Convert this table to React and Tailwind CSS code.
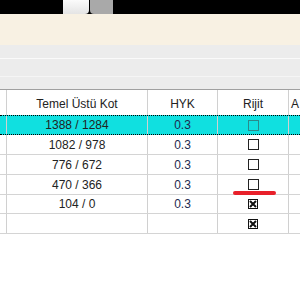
import React from 'react';

const rows = [
  { kot: '1388 / 1284', hyk: '0.3', rijit: 'empty', active: true, h: 'h-[20px]' },
  { kot: '1082 / 978', hyk: '0.3', rijit: 'empty', h: 'h-[20px]' },
  { kot: '776 / 672', hyk: '0.3', rijit: 'empty', h: 'h-[20px]' },
  { kot: '470 / 366', hyk: '0.3', rijit: 'empty', h: 'h-[20px]' },
  { kot: '104 / 0', hyk: '0.3', rijit: 'cross', h: 'h-[19px]' },
  { kot: '', hyk: '', rijit: 'cross', h: 'h-[20px]' },
];

// Checkbox drawn like the old WinForms grid cell
const CheckBox = ({ mode, active }) => {
  if (mode === 'cross') {
    return (
      <svg width="10" height="10" viewBox="0 0 10 10" aria-hidden="true">
        <rect x="0.5" y="0.5" width="9" height="9" fill="#fff" stroke="#111" />
        <path d="M2 2l6 6M8 2l-6 6" stroke="#111" strokeWidth="2" />
        <rect x="4" y="1.5" width="2" height="1" fill="#fff" />
        <rect x="4" y="7.5" width="2" height="1" fill="#fff" />
      </svg>
    );
  }
  return (
    <span
      className={`block w-[11px] h-[11px] border ${active ? 'border-[#2a8a8a] bg-[#10e0e0]' : 'border-[#222] bg-white'}`}
    />
  );
};

export default function App() {
  return (
    <div className="relative w-[300px] h-[300px] overflow-hidden bg-white text-[12px] text-[#222] font-['Liberation_Sans',Arial,sans-serif]">
      {/* top black strip with two tabs */}
      <div className="flex h-[14px] bg-black pl-[63px] gap-[1px]">
        <div className="w-[26px] h-full rounded-br-sm bg-gradient-to-b from-[#fbfbfb] to-[#e4e4e4]" />
        <div className="w-[23px] h-full rounded-bl-sm bg-[#a9a9a9]" />
      </div>

      {/* cream info band */}
      <div className="h-[31px] bg-[#f8f1e3]" />

      {/* toolbar area */}
      <div className="h-[13px] bg-[#ececec]" />
      <div className="h-[1px] bg-[#fafafa]" />
      <div className="h-[17px] bg-[#ececec]" />
      <div className="h-[1px] bg-[#f5f5f5]" />
      <div className="h-[12px] bg-[#ececec]" />

      {/* grid */}
      <div className="border-t border-[#a0a0a0]">
        <div className="flex h-[25px] items-center">
          <div className="w-[7px] h-full border-r border-[#d0d0d0]" />
          <div className="w-[141px] h-full flex items-center justify-center pt-[2px] border-r border-[#d0d0d0]">Temel Üstü Kot</div>
          <div className="w-[70px] h-full flex items-center justify-center pt-[2px] border-r border-[#d0d0d0]">HYK</div>
          <div className="w-[71px] h-full flex items-center justify-center pt-[2px] border-r border-[#d0d0d0]">Rijit</div>
          <div className="flex-1 h-full flex items-center pl-[2px] pt-[2px]">A</div>
        </div>

        {rows.map((r, i) => (
          <div
            key={i}
            className={`flex ${r.h} ${r.active ? 'bg-[#10e0e0] border-y border-dotted border-black' : 'border-b border-[#d4d4d4]'}`}
          >
            <div className="w-[7px] h-full border-r border-[#d0d0d0]" />
            <div className="w-[141px] h-full flex items-center justify-center border-r border-[#d0d0d0]">{r.kot}</div>
            <div className="w-[70px] h-full flex items-center justify-center border-r border-[#d0d0d0] text-[#1e2a50]">{r.hyk}</div>
            <div className="w-[71px] h-full flex items-center justify-center border-r border-[#d0d0d0]">
              <CheckBox mode={r.rijit} active={r.active} />
            </div>
            <div className="flex-1 h-full" />
          </div>
        ))}
      </div>

      {/* red annotation stroke */}
      <div className="absolute left-[233px] top-[191px] w-[43px] h-[4px] rounded-full bg-[#e8202a]" />
    </div>
  );
}
